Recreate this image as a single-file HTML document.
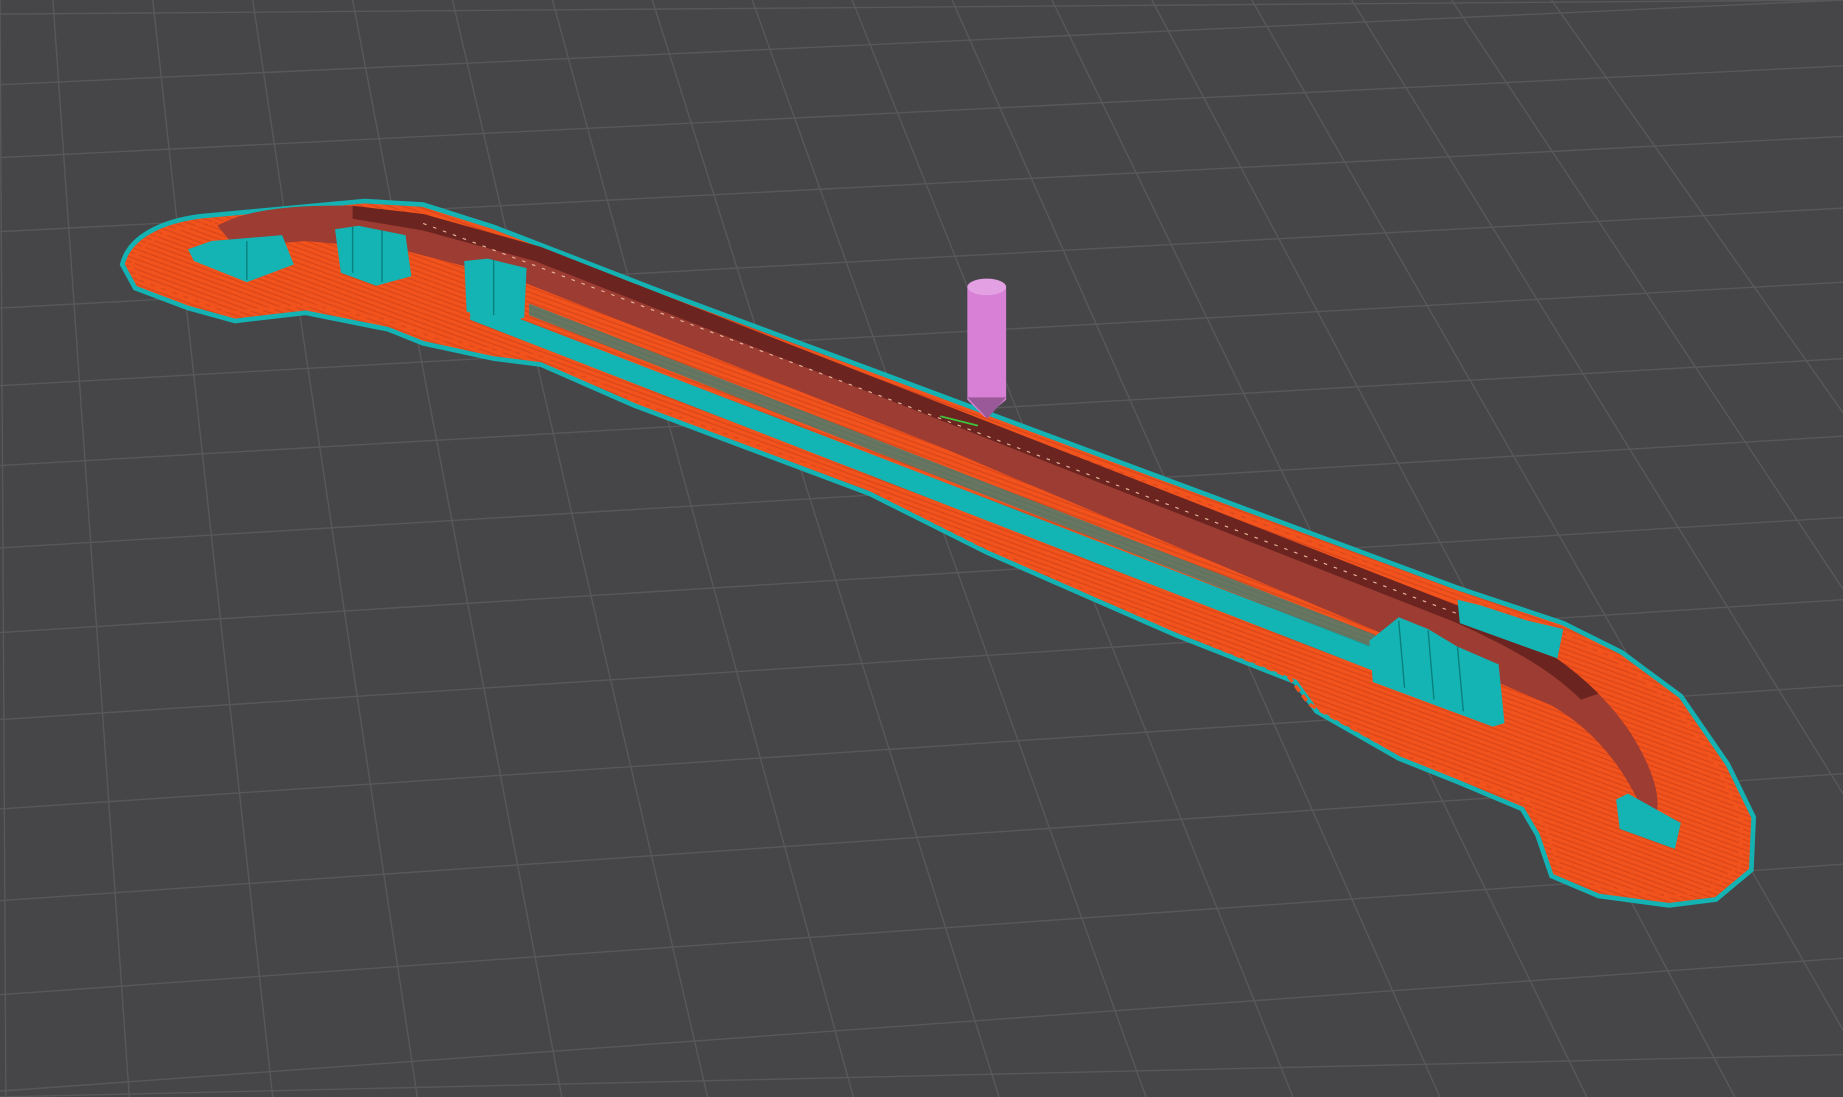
<!DOCTYPE html>
<html><head><meta charset="utf-8"><style>html,body{margin:0;padding:0;background:#464648;overflow:hidden;width:1843px;height:1097px}svg{position:absolute;left:0;top:0;display:block}</style></head>
<body>
<svg width="1843" height="1097" viewBox="0 0 1568 933" preserveAspectRatio="none" overflow="hidden" xmlns="http://www.w3.org/2000/svg">
<rect width="1568" height="933" fill="#464648"/>
<g stroke="#58585a" stroke-width="1.2" fill="none">
<line x1="0" y1="12" x2="1568" y2="0"/>
<line x1="0" y1="72" x2="1568" y2="0"/>
<line x1="0" y1="134" x2="1568" y2="56"/>
<line x1="0" y1="197" x2="1568" y2="116"/>
<line x1="0" y1="262" x2="1568" y2="177"/>
<line x1="0" y1="328" x2="1568" y2="240"/>
<line x1="0" y1="396" x2="1568" y2="305"/>
<line x1="0" y1="466" x2="1568" y2="371"/>
<line x1="0" y1="538" x2="1568" y2="440"/>
<line x1="0" y1="612" x2="1568" y2="510"/>
<line x1="0" y1="688" x2="1568" y2="583"/>
<line x1="0" y1="766" x2="1568" y2="658"/>
<line x1="0" y1="846" x2="1568" y2="735"/>
<line x1="0" y1="928" x2="1568" y2="815"/>
<line x1="0" y1="933" x2="1568" y2="897"/>
<line x1="0" y1="0" x2="5" y2="933"/>
<line x1="45" y1="0" x2="110" y2="933"/>
<line x1="130" y1="0" x2="232" y2="933"/>
<line x1="215" y1="0" x2="355" y2="933"/>
<line x1="300" y1="0" x2="478" y2="933"/>
<line x1="385" y1="0" x2="602" y2="933"/>
<line x1="470" y1="0" x2="726" y2="933"/>
<line x1="555" y1="0" x2="850" y2="933"/>
<line x1="640" y1="0" x2="975" y2="933"/>
<line x1="725" y1="0" x2="1100" y2="933"/>
<line x1="810" y1="0" x2="1225" y2="933"/>
<line x1="895" y1="0" x2="1350" y2="933"/>
<line x1="980" y1="0" x2="1476" y2="933"/>
<line x1="1065" y1="0" x2="1568" y2="876"/>
<line x1="1150" y1="0" x2="1568" y2="675"/>
<line x1="1235" y1="0" x2="1568" y2="501"/>
<line x1="1320" y1="0" x2="1568" y2="351"/>
</g>
<defs>
<pattern id="hatch" width="8" height="4" patternUnits="userSpaceOnUse" patternTransform="rotate(20)">
<rect width="8" height="4" fill="#f2521c"/><rect y="3" width="8" height="1" fill="#d8461a"/>
</pattern>
</defs>
<path d="M104,225 C110,200 140,188 170,184 L310,171 L360,174 L420,193 L560,247 L1240,500 L1330,530 L1380,555 L1430,592 L1470,650 L1492,695 L1490,740 L1460,765 L1420,770 L1360,762 L1320,745 L1308,710 L1295,688 L1240,665 L1190,645 L1120,605 L1102,580 L1000,540 L840,470 L740,420 L540,345 L460,310 L420,305 L360,292 L330,280 L260,266 L200,273 L160,262 L115,245 Z" fill="url(#hatch)" stroke="#14b2b2" stroke-width="4"/>
<path d="M112,228 C116,205 145,195 172,191 L310,178 L358,181 L415,200 L555,254 L1237,507 L1326,537 L1375,561 L1423,597 L1462,653 L1482,697 L1480,737 L1455,757 L1420,762 L1362,754 L1327,739 L1316,706 L1300,682 L1236,658 L1185,638 L1114,599 L1096,575 L995,534 L835,464 L736,414 L537,339 L458,303 L420,298 L362,285 L332,273 L260,259 L200,266 L162,255 L120,239 Z" fill="none" stroke="#f2521c" stroke-width="3" stroke-dasharray="6 4"/>
<path d="M400,255 L1180,555 L1180,575 L400,272 Z" fill="#12b4b4"/>
<path d="M450,258 L1170,540 L1170,552 L450,268 Z" fill="#0c8f8f" opacity="0.6"/>
<path d="M185,192 C210,178 250,174 300,175 L360,182 L460,210 L1240,515 C1300,540 1350,570 1385,620 C1405,650 1415,680 1408,695 L1398,690 C1380,650 1355,620 1320,600 L1250,570 L800,380 L440,238 L340,212 L260,205 L200,210 Z" fill="#9c3c33"/>
<path d="M300,175 L360,182 L460,210 L1240,515 C1290,535 1330,560 1360,590 L1345,595 C1320,570 1285,550 1235,528 L455,222 L360,196 L300,186 Z" fill="#6b241f"/>
<path d="M360,190 L1240,522" stroke="#e6b49a" stroke-width="1" stroke-dasharray="3 6"/>
<path d="M160,212 L180,205 L240,200 L250,225 L210,240 L165,222 Z" fill="#14b4b4"/>
<path d="M285,195 L305,192 L345,200 L350,235 L320,243 L290,232 Z" fill="#14b4b4"/>
<path d="M395,222 L415,220 L448,228 L446,270 L430,275 L397,265 Z" fill="#14b4b4"/>
<path d="M1165,545 L1190,525 L1215,535 L1240,550 L1275,565 L1280,615 L1270,618 L1168,580 Z" fill="#14b4b4"/>
<path d="M1240,510 L1260,515 L1300,528 L1330,535 L1325,560 L1242,530 Z" fill="#14b4b4"/>
<path d="M1375,680 L1385,675 L1430,700 L1425,722 L1378,705 Z" fill="#14b4b4"/>
<g stroke="#0a8080" stroke-width="1.2">
<line x1="1190" y1="528" x2="1195" y2="585"/><line x1="1215" y1="536" x2="1220" y2="595"/><line x1="1240" y1="550" x2="1245" y2="605"/>
<line x1="300" y1="193" x2="300" y2="232"/><line x1="325" y1="196" x2="325" y2="240"/><line x1="420" y1="221" x2="420" y2="268"/>
<line x1="210" y1="205" x2="210" y2="238"/>
</g>
<path d="M823,244 L823,340 L838,355 L856,340 L856,244 Z" fill="#d780d6"/>
<ellipse cx="839.5" cy="244" rx="16.5" ry="7" fill="#e3a0e3"/>
<path d="M823,338 L856,338 L840,356 Z" fill="#9a5a9a"/>
<line x1="800" y1="354" x2="832" y2="362" stroke="#3cc43c" stroke-width="1.5"/>
</svg>
</body></html>
